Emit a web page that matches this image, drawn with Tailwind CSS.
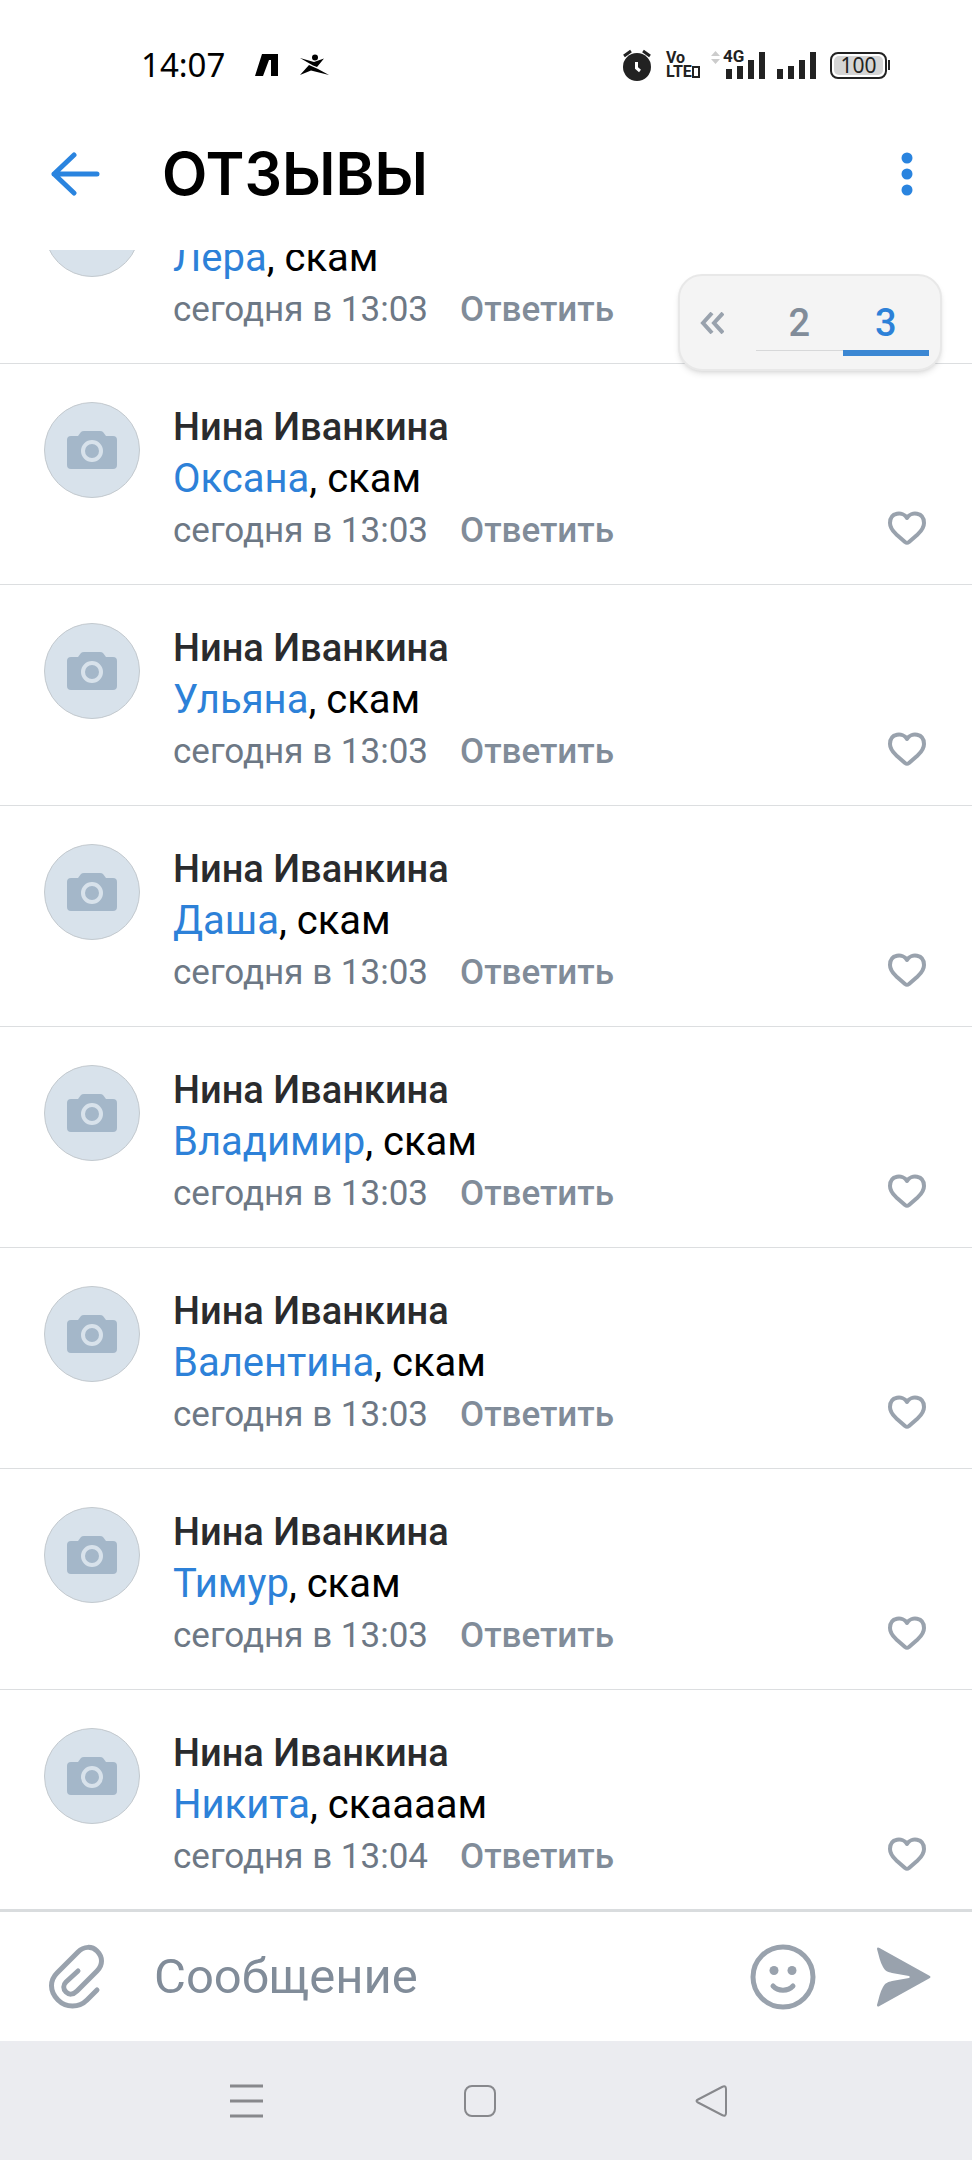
<!DOCTYPE html>
<html lang="ru">
<head>
  <meta charset="UTF-8" />
  <meta name="viewport" content="width=device-width, initial-scale=1" />
  <title>ОТЗЫВЫ</title>
  <script src="https://cdn.jsdelivr.net/npm/@tailwindcss/browser@4"></script>
  <style>
    body {
      font-family: Roboto, "Noto Sans", sans-serif;
    }
  </style>
</head>
<body class="bg-white">
  <div class="h-screen flex flex-col overflow-hidden">
    <!-- status bar -->
    <div class="h-[130px] shrink-0 flex items-center justify-between pl-[141px] pr-[82px] text-black">
      <div class="flex items-center">
        <span class="text-[33px] leading-[40px] font-['Noto_Sans']">14:07</span>
        <svg class="ml-[30px] w-[24px] h-[24px]" viewBox="0 0 24 24"><path d="M7 1H23V23H16V7L14 7L8 23H0Z" /></svg>
        <svg class="ml-[20px] w-[30px] h-[22px]" viewBox="0 0 30 22">
          <circle cx="16" cy="3.500" r="3" />
          <path d="M1 4L15 8L25 4.500L18 13L14 11.500Z" />
          <path d="M10 11L19 15L30 21L12 16.500L1 21Z" />
        </svg>
      </div>
      <div class="flex items-center text-[#222]">
        <svg class="w-[30px] h-[32px]" viewBox="0 0 30 32">
          <circle cx="15" cy="18" r="14" fill="currentColor" />
          <path d="M2 7L9 2M28 7L21 2" stroke="currentColor" stroke-width="3" />
          <path d="M14.500 13V19L18 22" fill="none" stroke="#fff" stroke-width="3" />
        </svg>
        <div class="ml-[14px] w-[34px] text-[16px] leading-[14px] font-bold">
          <div>Vo</div>
          <div class="flex items-center">LTE<span class="w-[8px] h-[12px] border-2 border-[#222]"></span></div>
        </div>
        <div class="relative ml-[11px] w-[54px] h-[28px]">
          <span class="absolute left-[12px] -top-[3px] text-[17px] leading-[16px] font-bold">4G</span>
          <svg class="w-[54px] h-[28px]" viewBox="0 0 54 28">
            <path d="M0 5L4.500 0L9 5ZM0 8L4.500 13L9 8Z" fill="#ccc" />
            <path d="M15 18h6v10h-6zM26 15h6v13h-6zM37 9h6v19h-6zM48 1h6v27h-6z" fill="currentColor" />
          </svg>
        </div>
        <svg class="ml-[12px] w-[39px] h-[28px]" viewBox="0 0 39 28">
          <path d="M0 18h6v10h-6zM11 15h6v13h-6zM22 9h6v19h-6zM33 1h6v27h-6z" fill="currentColor" />
        </svg>
        <div class="ml-[14px] w-[57px] h-[27px] rounded-[8px] border-2 border-[#222] p-[2px]">
          <div class="h-full rounded-[5px] bg-[#d5d5d5] flex items-center justify-center text-[21px] leading-[20px] font-['Noto_Sans']">100</div>
        </div>
        <div class="ml-px w-[2px] h-[10px] bg-[#222]"></div>
      </div>
    </div>

    <!-- title bar -->
    <header class="h-[120px] shrink-0 flex items-start pl-[50px] pr-[53px]">
      <button class="mt-[22px]" aria-label="Назад">
        <svg class="w-[52px] h-[44px]" viewBox="0 0 52 44" fill="none" stroke="#2a84df" stroke-width="5" stroke-linecap="round" stroke-linejoin="round">
          <path d="M24 3L4 22L24 41M4 22H47" />
        </svg>
      </button>
      <h1 class="ml-[60px] mt-[12px] grow text-[59px] leading-[64px] font-semibold font-[Inter] text-black">ОТЗЫВЫ</h1>
      <button class="mt-[22px]" aria-label="Ещё">
        <svg class="w-[24px] h-[44px]" viewBox="0 0 24 44" fill="#2a84df">
          <circle cx="12" cy="6" r="5.500" /><circle cx="12" cy="22" r="5.500" /><circle cx="12" cy="38" r="5.500" />
        </svg>
      </button>
    </header>

    <main class="relative grow min-h-0">
      <div id="comments" class="h-full flex flex-col justify-end overflow-hidden"></div>

      <!-- pages, float over the list -->
      <nav class="absolute top-[24px] right-[30px] w-[264px] h-[97px] rounded-[24px] border-2 border-[#e8e8e8] bg-[#f4f4f4] shadow-md flex items-start pr-[11px] pt-[20px] text-[38px] leading-[54px] font-medium text-center">
        <a href="#" class="w-[76px] h-[54px] flex items-center pl-[20px]" aria-label="В начало">
          <svg class="w-[24px] h-[22px]" viewBox="0 0 24 22" fill="none" stroke="#99a2ad" stroke-width="4"><path d="M12 1L3 11L12 21M23 1L14 11L23 21" /></svg>
        </a>
        <a href="#" class="flex-1 border-b border-[#d7d8d9] text-[#818c99]">2</a>
        <a href="#" class="flex-1 border-b-6 border-[#3b87d3] text-[#2d81d8]">3</a>
      </nav>
    </main>

    <!-- message form -->
    <form class="h-[132px] shrink-0 border-t-3 border-[#d9dcde] flex items-center pl-[46px] pr-[38px] text-[#99a2ad]">
      <button type="button" aria-label="Прикрепить">
        <svg class="w-[60px] h-[66px]" viewBox="0 0 60 66" fill="none" stroke="currentColor" stroke-width="5" stroke-linecap="round">
          <path d="M51 46L41 56C33 64 20 64 12 56C3 47 4 36 11 29L32 8C38 2 46 2 51 7C57 13 57 21 51 27L31 47C27 51 23 51 20 48C17 45 17 41 20 38L32 27" />
        </svg>
      </button>
      <input type="text" placeholder="Сообщение" aria-label="Сообщение" class="ml-[48px] grow min-w-0 h-[80px] text-[49px] outline-none placeholder:text-[#818c99]" />
      <button type="button" aria-label="Смайлы">
        <svg class="w-[66px] h-[66px]" viewBox="0 0 66 66" fill="none" stroke="currentColor" stroke-width="5" stroke-linecap="round">
          <circle cx="33" cy="33" r="30" />
          <circle cx="24" cy="26.500" r="4.500" fill="currentColor" stroke="none" /><circle cx="42" cy="26.500" r="4.500" fill="currentColor" stroke="none" />
          <path d="M23 42C28 47.500 38 47.500 43 42" />
        </svg>
      </button>
      <button type="submit" class="ml-[58px]" aria-label="Отправить">
        <svg class="w-[60px] h-[66px]" viewBox="0 0 60 66" fill="currentColor">
          <path d="M3 5C3 3.500 4 3 5.500 4L55 31.500C57 32.500 57 33.500 55 34.500L5.500 62C4 63 3 62.500 3 61C5 54 6 48 9 43C11 39 14 38 18 37L35 34C36 33.500 36 32.500 35 32L18 29C14 28 11 27 9 23C6 18 5 12 3 5Z" />
        </svg>
      </button>
    </form>

    <!-- system navigation -->
    <nav class="h-[119px] shrink-0 bg-[#ebecf0] flex items-center justify-between px-[229px] text-[#87888c]">
      <button aria-label="Меню">
        <svg class="w-[35px] h-[36px]" viewBox="0 0 35 36" stroke="currentColor" stroke-width="3"><path d="M1 3H34M1 18H34M1 33H34" /></svg>
      </button>
      <button aria-label="Домой">
        <svg class="w-[36px] h-[36px]" viewBox="0 0 36 36" fill="none" stroke="currentColor" stroke-width="2"><rect x="3" y="3" width="30" height="30" rx="7" /></svg>
      </button>
      <button aria-label="Назад" class="mr-[12px]">
        <svg class="w-[36px] h-[36px]" viewBox="0 0 36 36" fill="none" stroke="currentColor" stroke-width="2" stroke-linejoin="round"><path d="M3 16.500L27 4Q31 2 31 6V30Q31 34 27 32L3 19.500Q0 18 3 16.500Z" /></svg>
      </button>
    </nav>
  </div>

<script>
  const comments = [
    { to: 'Лера', text: 'скам', time: '13:03' },
    { to: 'Оксана', text: 'скам', time: '13:03' },
    { to: 'Ульяна', text: 'скам', time: '13:03' },
    { to: 'Даша', text: 'скам', time: '13:03' },
    { to: 'Владимир', text: 'скам', time: '13:03' },
    { to: 'Валентина', text: 'скам', time: '13:03' },
    { to: 'Тимур', text: 'скам', time: '13:03' },
    { to: 'Никита', text: 'скаааам', time: '13:04' },
  ];

  document.getElementById('comments').innerHTML = comments.map((c) => `
    <article class="shrink-0 flex border-t border-[#dcdee0] pl-[44px] pr-[45px] pt-[38px] pb-[27px] last:pb-[26px]">
      <svg class="w-[96px] h-[96px] shrink-0" viewBox="0 0 96 96">
        <circle cx="48" cy="48" r="47.500" fill="#d8e2eb" stroke="#c3c9ce" />
        <path d="M27 34H34L37 30Q38 29 40 29H56Q58 29 59 30L62 34H69Q73 34 73 38V63Q73 67 69 67H27Q23 67 23 63V38Q23 34 27 34Z" fill="#a4b7c9" />
        <circle cx="48" cy="49" r="9" fill="none" stroke="#d8e2eb" stroke-width="4" />
      </svg>
      <div class="ml-[33px] grow">
        <div class="text-[38px] leading-[50px] font-medium text-[#2a2b2d]">Нина Иванкина</div>
        <p class="text-[40px] leading-[53px] text-black"><a href="#" class="text-[#2d81d8]">${c.to}</a>, ${c.text}</p>
        <div class="flex gap-[32px] text-[35px] leading-[52px] text-[#6d7885]">
          <span>сегодня в ${c.time}</span>
          <button class="font-medium text-[#818c99]">Ответить</button>
        </div>
      </div>
      <button class="self-end mb-[11px]" aria-label="Нравится">
        <svg class="w-[40px] h-[36px]" viewBox="0 0 40 36" fill="none" stroke="#99a2ad" stroke-width="4" stroke-linejoin="round">
          <path d="M20 8C16 1 3 2 3 13C3 19 7 22 10 25L18 32Q20 33.500 22 32L30 25C33 22 37 19 37 13C37 2 24 1 20 8Z" />
        </svg>
      </button>
    </article>`).join('');
</script>
</body>
</html>
